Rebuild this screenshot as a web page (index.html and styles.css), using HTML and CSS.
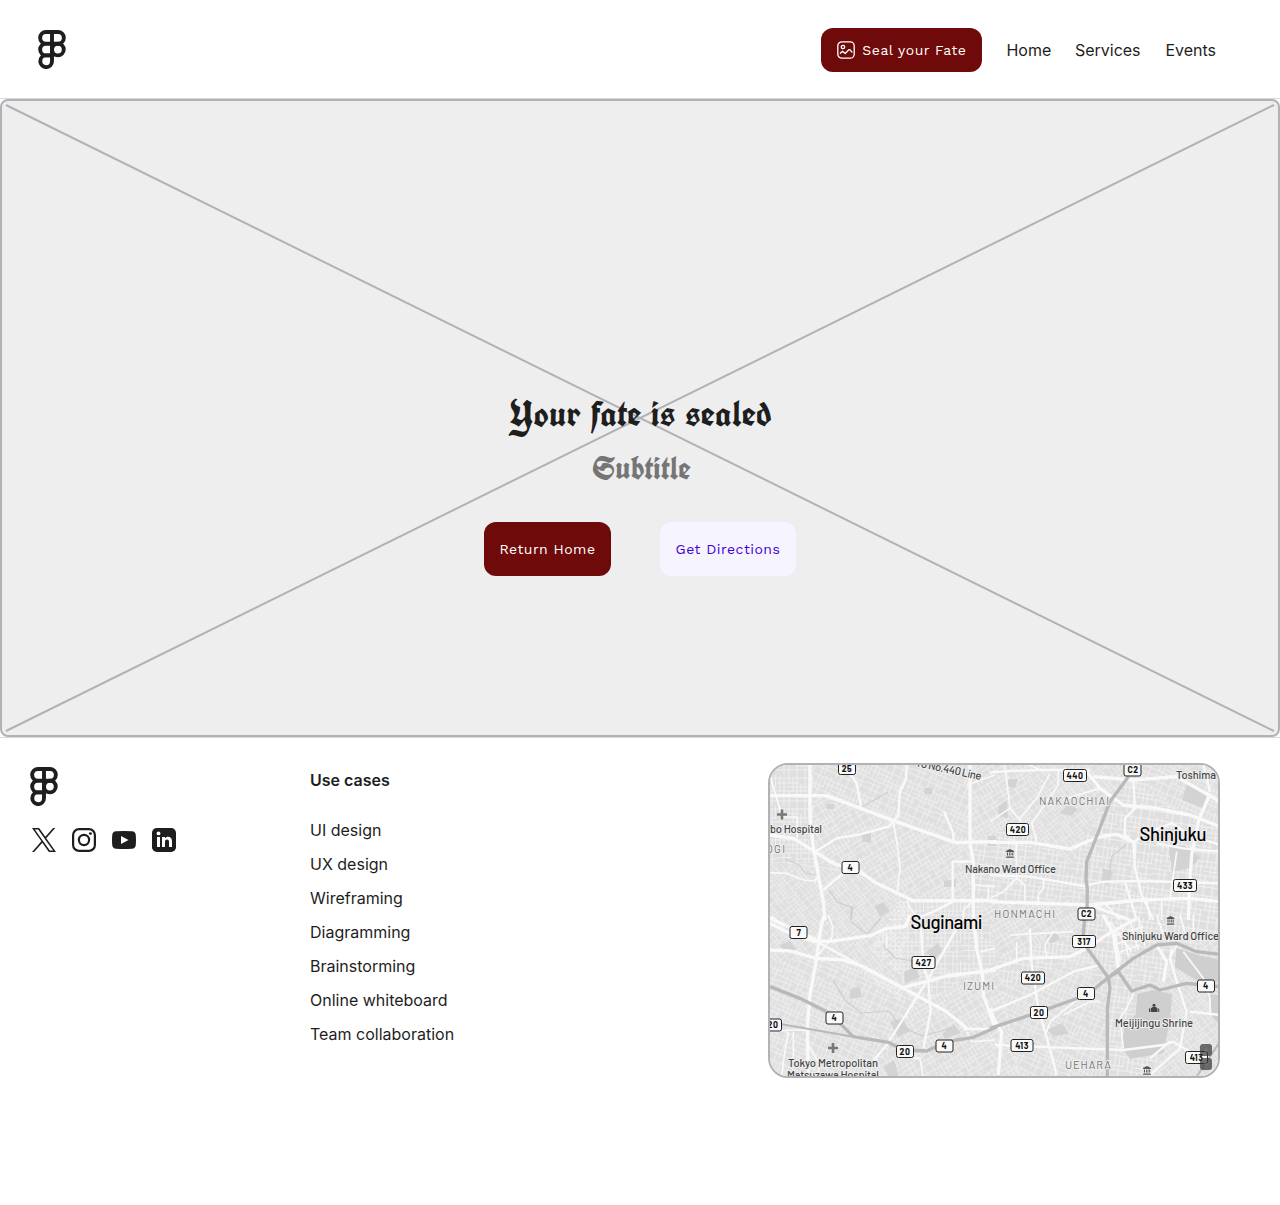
FILE: index.html
```html
<!DOCTYPE html>
<html lang="en">
<head>
<meta charset="utf-8">
<title>Your fate is sealed</title>
<link rel="stylesheet" href="styles.css">
</head>
<body>
<svg class="defs" width="0" height="0" aria-hidden="true">
  <symbol id="logo" viewBox="0 0 28 39"><g fill="none" stroke="#1e1e1e" stroke-width="3.900"><path d="M14 2H8a5.85 5.85 0 0 0 0 11.7h6zM14 2h6a5.85 5.85 0 0 1 0 11.7h-6M14 13.7H8a5.85 5.85 0 0 0 0 11.7h6z"/><circle cx="19.9" cy="19.55" r="5.85"/><path d="M14 25.4H8a5.85 5.85 0 1 0 6 5.85z"/></g></symbol>
  <symbol id="hall" viewBox="0 0 8 9"><path fill="#555" d="M4 0 0 2v1h8V2zM1 3.5h1v3H1zM3 3.5h.8v3H3zM4.600 3.500h.8v3h-.8zM6.200 3.500h1v3h-1zM.5 6.900h7v.7h-7zM0 8h8v.8H0z"/></symbol>
</svg>
<header class="header">
  <a class="brand" href="#"><svg width="28" height="39"><use href="#logo"/></svg></a>
  <nav class="nav">
    <a class="button seal" href="#">
      <svg width="18" height="18" viewBox="0 0 18 18" fill="none" stroke="#fff" stroke-width="1.3" stroke-linecap="round" stroke-linejoin="round"><rect x=".8" y=".8" width="16.400" height="16.400" rx="4"/><circle cx="6" cy="6" r="1.700"/><path d="M3.300 12.200l2.200-2 2.700 2.300 3.600-3.700q.6-.5 1.200 0l1.900 2.200"/></svg>
      <span>Seal your Fate</span>
    </a>
    <a class="link home" href="#">Home</a>
    <a class="link services" href="#">Services</a>
    <a class="link" href="#">Events</a>
  </nav>
</header>
<main class="hero">
  <svg class="cross" viewBox="0 0 1280 638"><path d="M6 6 1274 632M1274 6 6 632" stroke="#b2b1b6" stroke-width="2"/></svg>
  <div class="content">
    <h1 class="title">Your fate is sealed</h1>
    <p class="subtitle">Subtitle</p>
    <div class="actions">
      <a class="button return" href="#">Return Home</a>
      <a class="button directions" href="#">Get Directions</a>
    </div>
  </div>
</main>
<footer class="footer">
  <div class="identity">
    <svg class="mark" width="28" height="39"><use href="#logo"/></svg>
    <div class="social">
      <svg viewBox="0 0 24 24"><path fill="#1e1e1e" d="M14.280 10.160 23.220 0h-2.120l-7.760 8.820L7.140 0H0l9.370 13.340L0 24h2.120l8.200-9.330L16.860 24H24zM11.380 13.460l-.95-1.330L2.880 1.560h3.260l6.100 8.540.95 1.330 7.930 11.100h-3.260z"/></svg>
      <svg viewBox="0 0 24 24" fill="none" stroke="#1e1e1e" stroke-width="2.200"><rect x="1.100" y="1.100" width="21.800" height="21.800" rx="6"/><circle cx="12" cy="12" r="5.100"/><circle cx="18.400" cy="5.600" r="1.450" fill="#1e1e1e" stroke="none"/></svg>
      <svg viewBox="0 0 24 24"><path fill="#1e1e1e" d="M4 3.300Q12 2.700 20 3.300 23.300 3.500 23.700 6.500 24.300 12 23.700 17.500 23.300 20.500 20 20.700 12 21.300 4 20.700.7 20.500.3 17.500-.3 12 .3 6.500.7 3.500 4 3.300z"/><path fill="#fff" d="M9 8v8l7.500-4z"/></svg>
      <svg viewBox="0 0 24 24"><rect width="24" height="24" rx="4.800" fill="#1e1e1e"/><circle cx="6.500" cy="5.400" r="1.900" fill="#fff"/><path fill="#fff" d="M5 9h3v10H5zM10 9h3v1.300c1.600-2.500 7-2.200 7 2.700v6h-3v-5.300c0-3.200-4-2.900-4 0V19h-3z"/></svg>
    </div>
  </div>
  <div class="cases">
    <h2>Use cases</h2>
    <ul><li>UI design</li><li>UX design</li><li>Wireframing</li><li>Diagramming</li><li>Brainstorming</li><li>Online whiteboard</li><li>Team collaboration</li></ul>
  </div>
  <div class="map">
    <svg width="448" height="311" viewBox="770 765 448 311">
      <defs>
        <pattern id="streets" width="37" height="31" patternUnits="userSpaceOnUse"><path id="lanes" fill="none" stroke="#f4f4f4" stroke-width=".8" d="M0 3h37M0 8h22M9 12h28M0 16h37M0 20.500h15M18 22h19M0 26h37M3 0v16M7 3v28M12 0v8M12 16v15M16 3v13M20 0v31M24 8v14M28 0v16M28 22v9M32 3v28M35.500 0v12"/></pattern>
        <pattern id="s2" href="#streets" patternTransform="rotate(24)"/>
        <pattern id="s3" href="#streets" patternTransform="rotate(-31)"/>
        <pattern id="s4" href="#streets" patternTransform="rotate(52) scale(.85)"/>
        <pattern id="s5" href="#streets" patternTransform="rotate(8) scale(1.100)"/>
      </defs>
      <path fill="#dfdfdf" d="M768 763h452v315H768z"/>
      <path fill="url(#s5)" d="M768 763h452v315H768z"/>
      <g fill="#dfdfdf"><path id="w1" d="M768 763h45v100h-45zM900 900h80l20 60-70 40-60-50z"/><path id="w2" d="M813 763h157v80l-77-22-80-27zM768 963l70-8 80 40-60 83h-90zM1000 990l80-30 28 40v78h-90zM1130 763h90v60l-60-20z"/><path id="w3" d="M813 794l80 27 77 22v58l-57-3-60-26-35-9zM980 900h100v30l-80 30zM970 763h60l-10 60-50 20zM920 1000l80-30 20 108H870z"/><path id="w4" d="M768 863l85 9 60 26-13 102-62-45-70 8zM1030 763h100l-60 100-50-40zM1150 990l70-60v148h-60z"/></g>
      <path fill="url(#streets)" d="M768 763h45v100h-45zM900 900h80l20 60-70 40-60-50z"/>
      <path fill="url(#s2)" d="M813 763h157v80l-77-22-80-27zM768 963l70-8 80 40-60 83h-90zM1000 990l80-30 28 40v78h-90zM1130 763h90v60l-60-20z"/>
      <path fill="url(#s3)" d="M813 794l80 27 77 22v58l-57-3-60-26-35-9zM980 900h100v30l-80 30zM970 763h60l-10 60-50 20zM920 1000l80-30 20 108H870z"/>
      <path fill="url(#s4)" d="M768 863l85 9 60 26-13 102-62-45-70 8zM1030 763h100l-60 100-50-40zM1150 990l70-60v148h-60z"/>

      <g fill="#d3d3d3">
        <path d="M925 788h7v6h-8zM862 834l9-1v9h-8zM826 804h8v5h-7zM875 906l8-4 7 9-10 6zM998 807l9-7 1 18-9-2zM1187 785l21 9-5 14-21-8zM1169 847l15-2 16 13-10 10-18 4zM1068 805l10 4-7 7-12-3zM904 972l11-5 5 10-15 7zM850 990l9-4 3 11-12 2zM926 952l12-9 4 8-8 9zM890 1022l12-4 8 13-12 6zM942 1034l12-10 7 9-16 6zM884 1067l10-7 5 17h-10zM780 945l10-4 6 8-10 5zM1046 936l9-4 5 7-10 5zM1047 1030l15-7 7 11-16 2zM988 836h8v10h-8zM1103 868l10 4-3 9h-8zM944 881l12-2v8h-12zM1009 779h9l-3 9-9-2z"/>
        <path fill="#cfcfcf" d="M1137 994l16-4 19 4-2 28-7 31-33 6-8-12 2-20 12-13zM1176 948l22 7 22 5v22l-24-2-21-13zM1210 995h10v30l-8-8z"/>
      </g>
      <g fill="none" stroke="#cecece" stroke-width="1.200"><path d="M833 980l12 20 16 13 28-2 12 16 22 9 28-8M785 859l14 6 6 8 10 2M829 890l8 12 16 6-2 11M883 945l12 13 18 3M1126 845l-14 11-5 30M862 807l26-15M851 908v14l16 12 14-16"/></g>

      <!-- Minor and major streets, one group for each quarter of the district -->
      <g class="roads" transform="translate(760 755) scale(.33333)">
        <path class="minor" d="M30 60 50 130 68 190M68 186H112V250M400 200 412 270 420 340 412 410M30 353 80 355 130 375 165 378 175 360M440 437 450 460 480 495M641 390 705 395M685 395V437M610 495V465L640 437M620 90 705 60"/>
        <path d="M165 290 230 250 300 238 385 215 400 200 415 180 420 110 438 70 440 28M270 55 290 85 303 155M552 170 580 235V262M640 320H578V437M190 405 225 375 255 350M470 490 520 470 580 440M30 485 50 495"/>
        <path class="major" d="M150 25V180L160 280 175 360 190 440 195 495M30 122H200L400 197 585 262 710 260M30 240 100 250 165 290 220 325 300 350 350 385 460 437H710M630 25V265L640 320V495"/>
      </g>
      <g class="roads" transform="translate(990 755) scale(.33333)">
        <path class="minor" d="M45 30 60 160 95 200M180 55 140 130 90 190M205 48V90L125 205 140 260M78 260 80 370 40 410 0 430M80 370 105 390V440M160 375V400L145 420V445M435 262 435 310M340 440 390 495M470 435 480 495M515 435 515 495M560 290 550 360 540 430M330 100 230 130M0 200 60 160M110 25 150 45"/>
        <path d="M0 52 60 48 150 45 300 45M430 75 435 160 405 190V240L430 262 435 340 455 420 490 495M0 360 120 365 280 393 340 380 450 378 690 385M430 262 480 230 545 205 600 240 690 270M500 265 580 280 690 290M640 30 660 110M405 380 440 495"/>
        <path class="major" d="M0 262H120L240 282 290 260 340 243 380 238 430 262M290 50 330 100 400 150 500 160 600 180 690 215M310 65 430 75 560 65 690 140M660 115 625 200 605 300 600 370 595 495M0 440 300 450 450 435 600 430 690 440M300 450 420 495"/>
        <path class="highway" d="M415 65 360 140 310 270 290 320 288 375 292 400 291 480"/>
      </g>
      <g class="roads" transform="translate(760 915) scale(.33333)">
        <path class="minor" d="M205 0 218 35 215 70 175 120M85 350 70 440 65 490M440 425 480 430 490 490M100 350V440M620 350 635 380 705 375M30 350 90 345 140 345M660 110 705 100M145 390 180 450 170 490M380 60V100"/>
        <path d="M170 80 310 155M590 40 500 200 380 390 330 450M483 40 490 150 505 200 512 290 490 400M610 342H705M195 0 175 70"/>
        <path class="major" d="M195 0 185 20 170 130 150 240 142 330 145 495M30 25 90 55 165 80 220 78 330 62 380 40 435 35 450 0M30 10 180 80M30 105 90 108 170 130 250 135 310 155 430 220 560 290 620 340M420 220 560 183 705 165M640 0 650 100 668 180 670 240 702 330"/>
        <path class="highway side" d="M65 328 280 365"/>
        <path class="highway" d="M30 215 120 250 200 290 240 325 280 365 385 382 430 405 500 408 560 380 640 367 710 336"/>
      </g>
      <g class="roads" transform="translate(990 915) scale(.33333)">
        <path class="minor" d="M80 80V145M190 50 165 90 170 125M60 60 250 50M170 350 180 320 260 255M430 235 410 280 390 310 400 400M330 260H300L220 300M580 110 640 190 660 250V300M560 90 540 130 560 200M360 20 425 110M375 50 390 140M395 30 415 125M420 15 445 105M445 5 465 95M365 65 460 35M370 90 460 60M380 115 450 90M500 0 520 60M570 0 590 70M610 0V80"/>
        <path d="M120 40 125 150 145 280 165 350 190 440 200 480M15 390 400 405 520 390 550 380 600 410 650 450M0 290 120 240 250 170 330 150M545 100 540 130 560 200 590 290 570 400 480 480M600 290 690 300M480 430 540 380"/>
        <path class="major" d="M0 165 100 130 240 125 300 95 350 60 440 10M0 280 15 320 35 350 25 480M340 0 370 55 385 160M500 90 530 140 520 200"/>
        <path class="highway" d="M0 340 150 290 290 240 355 188 430 130 500 90 560 85 620 110 690 118M285 0 278 80 355 188 360 220 352 280V485M355 188 385 170 425 228 480 210 510 225 590 205 690 215"/>
        <path class="highway side" d="M690 380 620 485"/>
      </g>

      <g class="district">
        <text x="1039" y="805" textLength="70">NAKAOCHIAI</text><text x="994" y="918" textLength="61">HONMACHI</text><text x="963" y="990" textLength="31">IZUMI</text><text x="1065" y="1069" textLength="46">UEHARA</text><text x="766" y="853" textLength="19">OGI</text>
      </g>
      <g class="place">
        <text x="1176" y="779" textLength="40">Toshima</text><text x="770" y="832.500" textLength="52">bo Hospital</text><text x="965" y="872.500" textLength="91">Nakano Ward Office</text><text x="1122" y="939.500" textLength="97">Shinjuku Ward Office</text><text x="1115" y="1026.500" textLength="78">Meijijingu Shrine</text><text x="788" y="1066.500" textLength="90">Tokyo Metropolitan</text><text x="787" y="1079" textLength="92">Matsuzawa Hospital</text><text transform="translate(917 766.500) rotate(12)" textLength="65">ro No.440 Line</text>
      </g>
      <g class="city"><text x="1139.500" y="841" textLength="67">Shinjuku</text><text x="910.500" y="929" textLength="72">Suginami</text></g>

      <g class="shield">
        <rect x="838.500" y="762.500" width="17" height="12" rx="2"/><rect x="1063.500" y="769.500" width="23" height="12" rx="2"/><rect x="1124" y="764" width="17" height="12" rx="2"/><rect x="1006.500" y="823.500" width="22" height="12" rx="2"/><rect x="842" y="861.500" width="17" height="12" rx="2"/><rect x="1173.500" y="879.500" width="23" height="12" rx="2"/><rect x="1078" y="908" width="17" height="12" rx="2"/><rect x="790" y="926.500" width="17" height="12" rx="2"/><rect x="1072.500" y="935.500" width="23" height="12" rx="2"/><rect x="912" y="956.500" width="23" height="12" rx="2"/><rect x="1021.500" y="972" width="23" height="12" rx="2"/><rect x="1077.500" y="987.500" width="17" height="12" rx="2"/><rect x="1197.500" y="980" width="17" height="12" rx="2"/><rect x="1030.500" y="1006.500" width="17" height="12" rx="2"/><rect x="826" y="1012" width="17" height="12" rx="2"/><rect x="764.500" y="1019" width="17" height="12" rx="2"/><rect x="896.500" y="1045.500" width="17" height="12" rx="2"/><rect x="936" y="1040" width="17" height="12" rx="2"/><rect x="1011" y="1039.500" width="22" height="12" rx="2"/><rect x="1185.500" y="1051.500" width="22" height="12" rx="2"/>
        <text x="847" y="771.500">25</text><text x="1075" y="778.500">440</text><text x="1133" y="773">C2</text><text x="1018" y="832.500">420</text><text x="850.500" y="870.500">4</text><text x="1185" y="888.500">433</text><text x="1086.500" y="917">C2</text><text x="799" y="935.500">7</text><text x="1084" y="944.500">317</text><text x="923.500" y="965.500">427</text><text x="1033" y="981">420</text><text x="1086" y="996.500">4</text><text x="1206" y="989">4</text><text x="1039" y="1015.500">20</text><text x="834.500" y="1021">4</text><text x="773" y="1028">20</text><text x="905" y="1054.500">20</text><text x="944.500" y="1049">4</text><text x="1022" y="1048.500">413</text><text x="1196.500" y="1060.500">413</text>
      </g>
      <path stroke="#777" stroke-width="2.600" d="M777 814.500h10M782 809.500v10M828 1048h10M833 1043v10"/>
      <use href="#hall" x="1006" y="849" width="8" height="9"/><use href="#hall" x="1166.500" y="916" width="8" height="9"/><use href="#hall" x="1143" y="1066" width="8" height="9"/>
      <path fill="#444" d="M1150.700 1012v-3.500l1.800-1.500h3.500l1.500 1.500v3.500zM1149 1008.500h1v3.500h-1zM1158.200 1008.500h1v3.500h-1z"/><circle cx="1154" cy="1005.200" r="1.500" fill="#444"/>
      <g fill="#333" fill-opacity=".7"><rect x="1200" y="1044" width="12" height="12" rx="3"/><rect x="1200" y="1058" width="12" height="12" rx="3"/></g>
      <path stroke="#777" stroke-width="1.200" d="M1204 1050h4M1206 1048v4M1204 1064h4"/>
    </svg>
  </div>
</footer>
</body>
</html>
```
FILE: styles.css
```css
* { box-sizing: border-box; }
body { margin: 0; background: #fff; color: #1e1e1e; font-family: Inter, sans-serif; font-size: 16px; }
a { color: inherit; text-decoration: none; }
svg { display: block; }
.defs { position: absolute; }

.header { display: flex; align-items: center; justify-content: space-between; height: 99px; padding: 0 64px 0 38px; border-bottom: 1px solid #d9d9d9; }
.brand { padding-top: 1px; }
.nav { display: flex; align-items: center; gap: 24px; padding-top: 1px; }
.link { line-height: 22px; white-space: nowrap; }
.button { display: flex; align-items: center; justify-content: center; border-radius: 12px; background: #6f0a0a; color: #fff; font-family: "Work Sans", Inter, sans-serif; font-size: 14px; font-weight: 450; letter-spacing: .5px; white-space: nowrap; }
.seal { width: 161px; height: 44px; gap: 7px; }
.home { width: 44.500px; }
.services { width: 66.500px; }

.hero { position: relative; display: flex; justify-content: center; height: 638px; border: 2px solid #b2b1b6; border-radius: 8px; background: #eee; }
.cross { position: absolute; top: -2px; left: -2px; width: 1280px; height: 638px; }
.content { position: relative; display: flex; flex-direction: column; align-items: center; padding-top: 289px; }
.title, .subtitle { margin: 0; font-family: UnifrakturCook, "Liberation Serif", serif; font-weight: 700; white-space: nowrap; }
.title { font-size: 36px; line-height: 48px; letter-spacing: .36px; padding-left: 1px; }
.subtitle { padding: 8px 0 0 3px; font-size: 32px; line-height: 44px; color: #757575; }
.actions { display: flex; gap: 49px; padding-top: 32px; }
.return { width: 127px; height: 54px; }
.directions { width: 136px; height: 54px; background: #f6f4ff; color: #4100d9; }

.footer { display: grid; grid-template-columns: 280px 458px 452px; height: 468px; padding: 25px 0 0 30px; border-top: 1px solid #d9d9d9; }
.mark { margin-top: 4px; }
.social { display: flex; gap: 16px; padding: 22px 0 0 2px; }
.social svg { width: 24px; height: 24px; }
.cases h2 { margin: 0; padding-top: 6px; font-size: 16px; font-weight: 600; line-height: 22px; }
.cases ul { display: flex; flex-direction: column; gap: 12px; margin: 0; padding: 28px 0 0; list-style: none; line-height: 22px; }
.map { width: 452px; height: 315px; overflow: hidden; border: 2px solid #b2b1b6; border-radius: 20px; }
.roads { fill: none; stroke: #f9f9f9; stroke-width: 7; stroke-linejoin: round; }
.roads .minor { stroke-width: 5; }
.roads .major { stroke-width: 10; }
.roads .highway { stroke: #b9b9b9; stroke-width: 10; }
.roads .side { stroke-width: 6; }
.map text { font-family: Barlow, Roboto, sans-serif; paint-order: stroke; stroke: #eee; stroke-width: 2px; stroke-linejoin: round; }
.map .district text { font-size: 11px; fill: #777; }
.map .place text { font-size: 11.200px; font-weight: 500; fill: #444; }
.map .city text { font-size: 18.500px; font-weight: 500; fill: #000; }
.map .shield rect { fill: #fafafa; stroke: #222; stroke-width: 1; }
.map .shield text { font-size: 8.700px; font-weight: 700; fill: #111; stroke: none; text-anchor: middle; letter-spacing: .5px; }
```
